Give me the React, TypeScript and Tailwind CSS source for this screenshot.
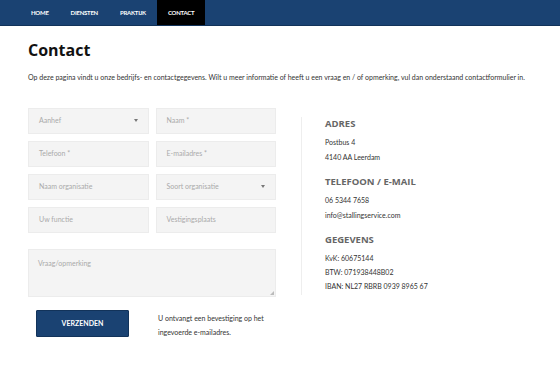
import React from "react";

const navItems = ["HOME", "DIENSTEN", "PRAKTIJK", "CONTACT"];

const Field: React.FC<{ label: string; select?: boolean }> = ({ label, select }) => (
  <div className="h-[26px] flex items-center justify-between px-[10px] bg-[#f4f4f4] border border-[#ececec] text-[7px] text-[#aaa]">
    <span>{label}</span>
    {select && <span className="w-0 h-0 border-l-[2.5px] border-r-[2.5px] border-t-[3px] border-l-transparent border-r-transparent border-t-[#777]" />}
  </div>
);

export default function App() {
  return (
    <div className="w-[560px] h-[366px] bg-white overflow-hidden font-['Lato',sans-serif] text-[#333]">
      {/* nav */}
      <nav className="h-[26px] bg-[#1a4272] border-b border-[#12335a] flex pl-[20px]">
        {navItems.map((item) => (
          <a
            key={item}
            className={`h-full flex items-center px-[11px] text-[6px] font-bold text-white tracking-[-0.25px] ${
              item === "CONTACT" ? "bg-black" : ""
            }`}
          >
            {item}
          </a>
        ))}
      </nav>

      <main className="px-[28px]">
        <h1 className="mt-[13px] text-[16px] font-bold font-['Open_Sans',sans-serif] text-[#111] leading-[22px]">
          Contact
        </h1>
        <p className="mt-[11px] text-[7px] text-[#333]">
          Op deze pagina vindt u onze bedrijfs- en contactgegevens. Wilt u meer informatie of heeft u een vraag en / of opmerking, vul dan onderstaand contactformulier in.
        </p>

        <div className="mt-[25px] flex">
          {/* form */}
          <div className="w-[248px]">
            <div className="grid grid-cols-2 gap-x-[7px] gap-y-[7px]">
              <Field label="Aanhef" select />
              <Field label="Naam *" />
              <Field label="Telefoon *" />
              <Field label="E-mailadres *" />
              <Field label="Naam organisatie" />
              <Field label="Soort organisatie" select />
              <Field label="Uw functie" />
              <Field label="Vestigingsplaats" />
            </div>
            <div className="relative mt-[16px] h-[48px] bg-[#f4f4f4] border border-[#ececec] px-[9px] pt-[8px] text-[7px] text-[#aaa]">
              Vraag/opmerking
              <span className="absolute right-[1px] bottom-[1px] w-0 h-0 border-l-[4px] border-b-[4px] border-l-transparent border-b-[#bbb]" />
            </div>
            <div className="mt-[13px] flex">
              <button className="ml-[8px] w-[93px] h-[27px] bg-[#1a4272] border border-[#12335a] rounded-[1px] text-white text-[7px] font-bold">
                VERZENDEN
              </button>
              <p className="ml-[29px] mt-[1px] text-[7px] leading-[14px] text-[#333]">
                U ontvangt een bevestiging op het
                <br />
                ingevoerde e-mailadres.
              </p>
            </div>
          </div>

          {/* info */}
          <div className="ml-[25px] mt-[9px] h-[178px] border-l border-[#eee] pl-[23px]">
            <h2 className="text-[9.5px] font-bold font-['Open_Sans',sans-serif] text-[#666] leading-[14px]">ADRES</h2>
            <div className="mt-[4px] text-[7px] leading-[15px]">
              <p>Postbus 4</p>
              <p>4140 AA Leerdam</p>
            </div>
            <h2 className="mt-[10px] text-[9.5px] font-bold font-['Open_Sans',sans-serif] text-[#666] leading-[14px]">TELEFOON / E-MAIL</h2>
            <div className="mt-[4px] text-[7px] leading-[15px]">
              <p>06 5344 7658</p>
              <p>info@stallingservice.com</p>
            </div>
            <h2 className="mt-[10px] text-[9.5px] font-bold font-['Open_Sans',sans-serif] text-[#666] leading-[14px]">GEGEVENS</h2>
            <div className="mt-[4px] text-[7px] leading-[14px]">
              <p>KvK: 60675144</p>
              <p>BTW: 071938448B02</p>
              <p>IBAN: NL27 RBRB 0939 8965 67</p>
            </div>
          </div>
        </div>
      </main>
    </div>
  );
}
